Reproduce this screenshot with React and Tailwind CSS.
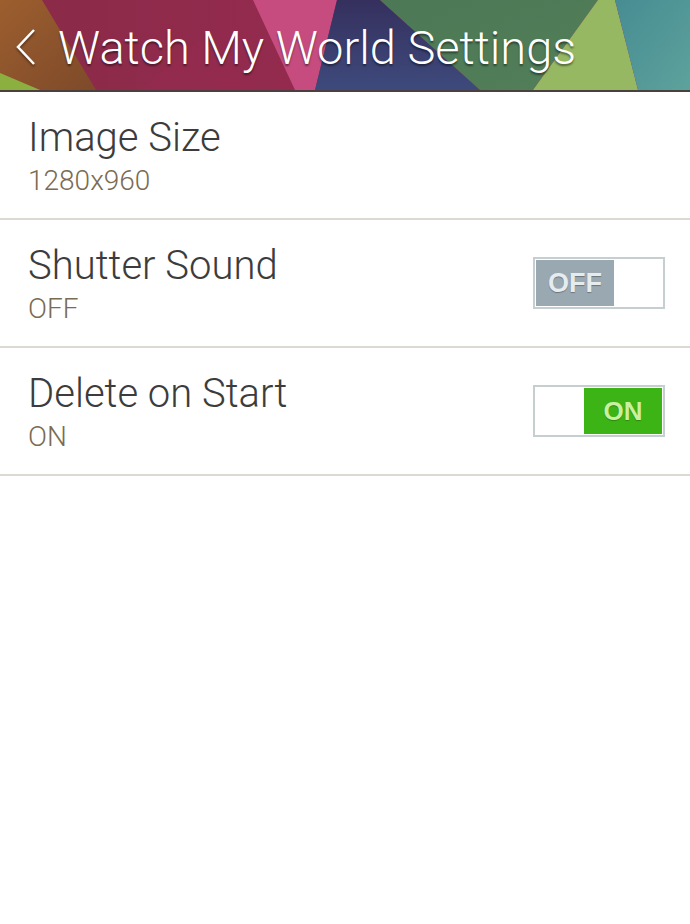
import React from "react";

const ROWS = [
  { id: "size", title: "Image Size", value: "1280x960", toggle: null },
  { id: "shutter", title: "Shutter Sound", value: "OFF", toggle: false },
  { id: "delete", title: "Delete on Start", value: "ON", toggle: true },
];

function HeaderArt() {
  return (
    <svg
      className="absolute inset-0 w-full h-full"
      viewBox="0 0 690 90"
      preserveAspectRatio="none"
    >
      <defs>
        <linearGradient id="brown" x1="0" y1="0" x2="1" y2="1">
          <stop offset="0" stopColor="#9c5e2e" />
          <stop offset="1" stopColor="#7e4a2a" />
        </linearGradient>
        <linearGradient id="crimson" x1="0" y1="0" x2="1" y2="0">
          <stop offset="0" stopColor="#8a2a48" />
          <stop offset="1" stopColor="#a02c56" />
        </linearGradient>
        <linearGradient id="navy" x1="0" y1="0" x2="0" y2="1">
          <stop offset="0" stopColor="#35305e" />
          <stop offset="1" stopColor="#3e4a7c" />
        </linearGradient>
        <linearGradient id="green" x1="0" y1="0" x2="1" y2="1">
          <stop offset="0" stopColor="#4c7856" />
          <stop offset="1" stopColor="#527e58" />
        </linearGradient>
        <linearGradient id="teal" x1="0" y1="0" x2="1" y2="1">
          <stop offset="0" stopColor="#468c92" />
          <stop offset="1" stopColor="#5ea29c" />
        </linearGradient>
      </defs>
      <rect x="0" y="0" width="690" height="90" fill="url(#crimson)" />
      <polygon points="0,0 42,0 96,90 0,90" fill="url(#brown)" />
      <polygon points="0,73 40,90 0,90" fill="#8cb040" />
      <polygon points="140,90 200,40 250,90" fill="#952b50" opacity="0.6" />
      <polygon points="253,0 337,0 315,90 295,90" fill="#c64c80" />
      <polygon points="337,0 380,0 480,90 315,90" fill="url(#navy)" />
      <polygon points="380,0 598,0 533,90 480,90" fill="url(#green)" />
      <polygon points="598,0 615,0 638,90 533,90" fill="#96b862" />
      <polygon points="615,0 690,0 690,90 638,90" fill="url(#teal)" />
    </svg>
  );
}

function Toggle({ on }) {
  return (
    <div className="w-[132px] h-[52px] border-2 border-[#c6cfcf] bg-white flex p-px font-['Liberation_Sans',sans-serif]">
      {on ? (
        <>
          <div className="flex-1" />
          <div className="w-[78px] bg-[#3db415] flex items-center justify-center pt-px text-[26px] font-bold text-[#c8f0a0] [text-shadow:0_1px_1px_rgba(0,0,0,0.25)]">
            ON
          </div>
        </>
      ) : (
        <>
          <div className="w-[78px] bg-[#9aa8b2] flex items-center justify-center pt-px text-[27px] font-bold text-[#e6ecee] [text-shadow:0_1px_1px_rgba(0,0,0,0.3)]">
            OFF
          </div>
          <div className="flex-1" />
        </>
      )}
    </div>
  );
}

export default function App() {
  return (
    <div className="w-[690px] h-[924px] bg-white font-['Roboto',sans-serif]">
      {/* Action bar */}
      <div className="relative h-[92px] border-b-2 border-[#4a4040] overflow-hidden">
        <HeaderArt />
        <div className="relative flex items-center h-full pl-[13px] pt-[4px] text-white [text-shadow:0_2px_2px_rgba(0,0,0,0.45)]">
          <svg width="26" height="40" viewBox="0 0 26 40" className="drop-shadow-[0_2px_1px_rgba(0,0,0,0.4)]">
            <polyline points="21,3 5,20 21,37" fill="none" stroke="white" strokeWidth="2.5" />
          </svg>
          <span className="ml-[19px] text-[47px] font-light leading-none">Watch My World Settings</span>
        </div>
      </div>

      {/* Settings list */}
      {ROWS.map((row) => (
        <div
          key={row.id}
          className="h-[128px] border-b-2 border-[#dcd8d4] flex items-center justify-between pl-[28px] pr-[25px]"
        >
          <div className="flex flex-col pt-[4px]">
            <span className="text-[40px] font-light leading-[46px] text-[#3c3c3c]">{row.title}</span>
            <span className="text-[28px] font-light leading-[36px] mt-[2px] text-[#7a6b52]">{row.value}</span>
          </div>
          {row.toggle !== null && <Toggle on={row.toggle} />}
        </div>
      ))}
    </div>
  );
}
